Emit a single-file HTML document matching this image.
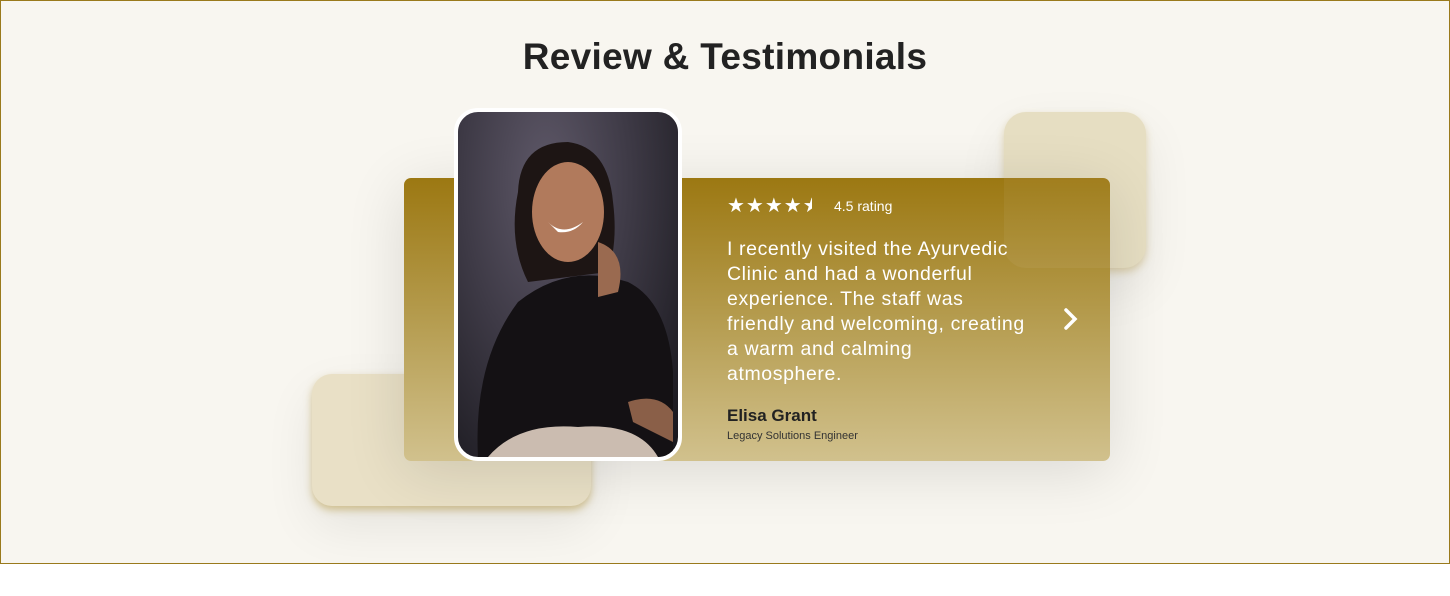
<!DOCTYPE html>
<html><head><style>
body{margin:0;width:1450px;height:596px;background:#fff;font-family:"Liberation Sans",sans-serif;position:relative;overflow:hidden}
.frame{position:absolute;left:0;top:0;width:1448px;height:562px;border:1px solid #9a7a1c;background:#f8f6f0}
h1{position:absolute;top:36px;left:0;width:1450px;text-align:center;margin:0;font-size:37px;font-weight:bold;color:#222;letter-spacing:0.3px}
.bl{position:absolute;left:312px;top:374px;width:279px;height:132px;border-radius:20px;background:#e9e0c6;box-shadow:0 4px 8px rgba(180,150,60,.5),0 20px 50px rgba(0,0,0,.08)}
.card{position:absolute;left:404px;top:178px;width:706px;height:283px;border-radius:7px;background:linear-gradient(180deg,#9c7812 0%,#b59c4f 50%,#d1c18d 100%);box-shadow:0 10px 60px rgba(0,0,0,.12)}
.br{position:absolute;left:1004px;top:112px;width:142px;height:156px;border-radius:22px;background:#e6dec2;box-shadow:0 4px 8px rgba(180,150,60,.35),0 20px 50px rgba(0,0,0,.08)}
.ov{position:absolute;left:1004px;top:178px;width:106px;height:90px;border-bottom-left-radius:22px;background:rgba(255,255,255,.05)}
.photo{position:absolute;left:454px;top:108px;width:220px;height:345px;border:4px solid #fff;border-radius:24px;overflow:hidden;background:radial-gradient(ellipse at 40% 20%,#5e5868 0%,#3e3a46 45%,#16151a 100%)}
.t{position:absolute;color:#fff}
.q div{white-space:nowrap}
</style></head><body>
<div class="frame"></div>
<h1>Review &amp; Testimonials</h1>
<div class="bl"></div>
<div class="br"></div>
<div class="card"></div>
<div class="ov"></div>
<div class="photo">
<svg width="220" height="345" viewBox="0 0 220 345">
<path d="M60 80 Q62 30 110 30 Q150 35 155 90 Q160 130 150 160 L70 170 Q50 130 60 80Z" fill="#1d1514"/>
<ellipse cx="110" cy="100" rx="36" ry="50" fill="#b17a5c"/>
<path d="M90 110 Q105 125 125 110 Q115 122 100 120Z" fill="#fff"/>
<path d="M60 190 Q110 150 170 170 Q210 190 215 260 L215 345 L20 345 Q15 250 60 190Z" fill="#141114"/>
<path d="M140 130 Q170 140 160 180 L140 185Z" fill="#9a6a50"/>
<path d="M30 345 Q60 310 120 315 Q180 310 200 345Z" fill="#cbbcb0"/>
<path d="M170 290 Q200 280 215 300 L215 330 Q195 320 175 310Z" fill="#8a5f48"/>
</svg>
</div>
<div class="t" style="left:727px;top:193px;font-size:20px;letter-spacing:1px">★★★★<span style="display:inline-block;width:9px;overflow:hidden;vertical-align:top">★</span></div>
<div class="t" style="left:834px;top:198px;font-size:14px">4.5 rating</div>
<div class="t q" style="left:727px;top:237px;font-size:19.5px;line-height:25px;letter-spacing:0.6px">
<div>I recently visited the Ayurvedic</div><div>Clinic and had a wonderful</div><div>experience. The staff was</div><div>friendly and welcoming, creating</div><div>a warm and calming</div><div>atmosphere.</div></div>
<svg style="position:absolute;left:1062px;top:307px" width="18" height="24"><path d="M4 3 L13 12 L4 21" stroke="#fff" stroke-width="3.5" fill="none" stroke-linecap="round"/></svg>
<div style="position:absolute;left:727px;top:406px;font-size:17px;font-weight:bold;color:#222">Elisa Grant</div>
<div style="position:absolute;left:727px;top:430px;font-size:11px;color:#333">Legacy Solutions Engineer</div>
</body></html>
